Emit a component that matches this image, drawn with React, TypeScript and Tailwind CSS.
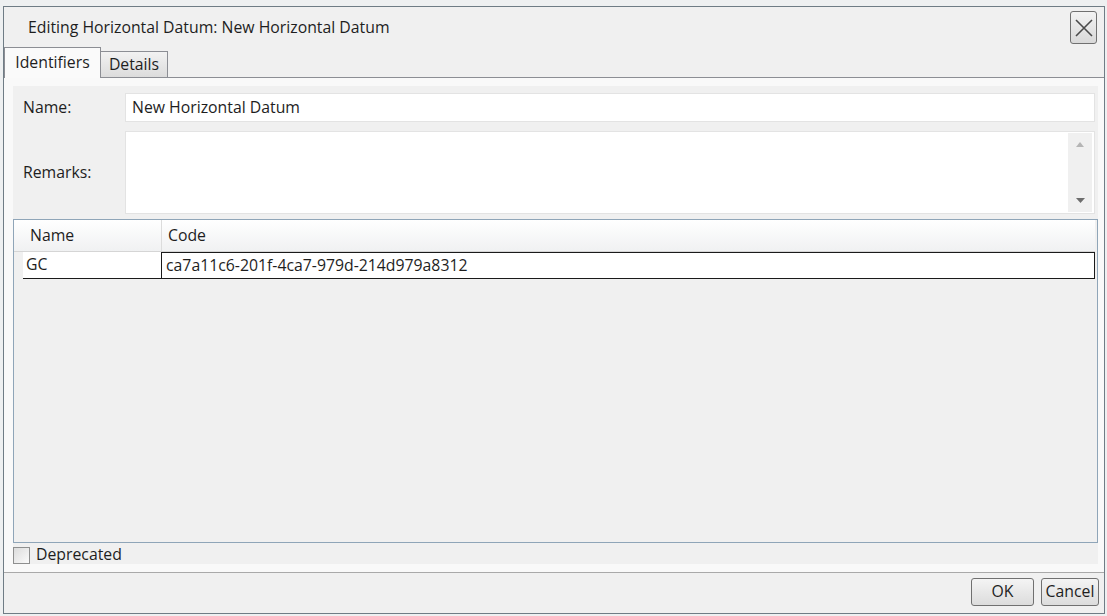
import { useState } from 'react';

const FONT = "font-['Open_Sans','Noto_Sans',sans-serif]";

function CloseButton() {
  return (
    <button className="w-[27px] h-[33px] rounded-[3px] border border-[#707070] bg-gradient-to-b from-[#f3f3f3] to-[#d9d9d9] flex items-center justify-center">
      <svg width="20" height="20" viewBox="0 0 20 20">
        <path d="M2 2 L18 18 M18 2 L2 18" stroke="#4a4a4a" strokeWidth="1.6" fill="none" />
      </svg>
    </button>
  );
}

function Button({ label, width }: { label: string; width: string }) {
  return (
    <button
      className={`${width} h-[28px] rounded-[3px] border border-[#707070] bg-gradient-to-b from-[#f4f4f4] to-[#dcdcdc] text-[15.8px] text-[#1e1e1e] leading-none`}
    >
      {label}
    </button>
  );
}

export default function App() {
  const [deprecated, setDeprecated] = useState(false);

  return (
    <div className={`w-[1107px] h-[616px] bg-[#eef0f1] pt-[6px] pl-[3px] overflow-hidden ${FONT}`}>
      <div className="w-[1102px] h-[608px] border border-[#6f7c85] bg-[#f0f0f0] flex flex-col text-[#1e1e1e] text-[15.8px]">
        {/* Title bar */}
        <div className="h-[40px] flex items-start justify-between pl-[24px] pr-[7px]">
          <span className="mt-[9px] leading-[22px]">Editing Horizontal Datum: New Horizontal Datum</span>
          <div className="mt-[4px]">
            <CloseButton />
          </div>
        </div>

        {/* Tabs */}
        <div className="h-[30px] flex items-end">
          <div className="w-[97px] h-[31px] -mb-px z-10 border border-b-0 border-[#8c8e94] bg-[#fafafa] flex items-center justify-center">
            Identifiers
          </div>
          <div className="w-[67px] h-[26px] border border-l-0 border-b-0 border-[#8c8e94] bg-gradient-to-b from-[#f2f2f2] to-[#dcdcdc] flex items-center justify-center">
            Details
          </div>
        </div>

        {/* Tab body */}
        <div className="h-[496px] border-t border-b border-[#8c8e94] border-b-[#a9a9a9] bg-[#f9f9f9] pt-[8px] pl-[9px] pr-[6px] pb-[8px]">
          <div className="h-full bg-[#f0f0f0] flex flex-col">
            {/* Name */}
            <div className="flex items-center mt-[7px] h-[29px]">
              <span className="w-[112px] pl-[10px]">Name:</span>
              <div className="flex-1 mr-[3px] h-[29px] bg-white border border-[#e3e3e3] flex items-center pl-[6px]">
                New Horizontal Datum
              </div>
            </div>

            {/* Remarks */}
            <div className="flex items-center mt-[9px] h-[83px]">
              <span className="w-[112px] pl-[10px]">Remarks:</span>
              <div className="flex-1 mr-[3px] h-[83px] bg-white border border-[#e3e3e3] flex justify-end">
                <div className="w-[24px] mr-[2px] my-[1px] bg-[#f0f0f0] flex flex-col items-center justify-between py-[9px]">
                  <svg width="8" height="5" viewBox="0 0 8 5">
                    <path d="M0 5 L4 0 L8 5 Z" fill="#b5b5b5" />
                  </svg>
                  <svg width="9" height="5" viewBox="0 0 9 5">
                    <path d="M0 0 L9 0 L4.5 5 Z" fill="#6d6d6d" />
                  </svg>
                </div>
              </div>
            </div>

            {/* Table */}
            <div className="mt-[5px] h-[325px] border border-[#8fa5b8] bg-[#f0f0f0] flex flex-col">
              <div className="h-[32px] flex bg-gradient-to-b from-[#ffffff] to-[#f0f1f2] border-b border-[#d5d5d5] mr-[2px]">
                <div className="w-[9px]" />
                <div className="w-[139px] border-r border-[#dcdcdc] flex items-center pl-[7px]">Name</div>
                <div className="flex-1 flex items-center pl-[6px]">Code</div>
              </div>
              <div className="h-[27px] flex mr-[2px]">
                <div className="w-[9px]" />
                <div className="w-[138px] bg-white border-b border-[#1a1a1a] flex items-center pl-[3px]">GC</div>
                <div className="flex-1 bg-white border border-[#1a1a1a] flex items-center pl-[4px]">
                  ca7a11c6-201f-4ca7-979d-214d979a8312
                </div>
              </div>
            </div>

            {/* Deprecated */}
            <label className="mt-[3px] h-[18px] flex items-center gap-[6px]">
              <span
                onClick={() => setDeprecated(!deprecated)}
                className="w-[17px] h-[17px] border border-[#8e8f8f] bg-gradient-to-br from-[#dcdcdc] to-[#fbfbfb] flex items-center justify-center"
              >
                {deprecated && <span className="text-[11px]">✓</span>}
              </span>
              Deprecated
            </label>
          </div>
        </div>

        {/* Buttons */}
        <div className="flex-1 flex justify-end items-start pt-[5px] pr-[5px] gap-[7px]">
          <Button label="OK" width="w-[63px]" />
          <Button label="Cancel" width="w-[58px]" />
        </div>
      </div>
    </div>
  );
}
